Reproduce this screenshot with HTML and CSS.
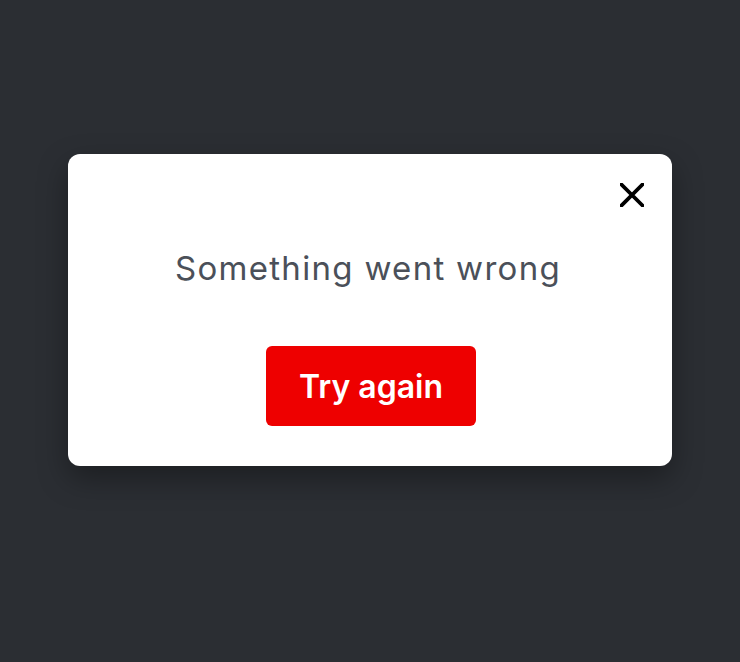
FILE: index.html
```html
<!DOCTYPE html>
<html lang="en">
<head>
<meta charset="utf-8">
<title>Error</title>
<link rel="stylesheet" href="styles.css">
</head>
<body>
<div class="overlay">
  <div class="modal" role="dialog">
    <div class="modal-head">
      <button class="close" aria-label="Close">
        <svg width="24" height="24" viewBox="0 0 24 24"><path d="M1.5 1.5L22.5 22.5M22.5 1.5L1.5 22.5" stroke="#000" stroke-width="3.8" stroke-linecap="square" fill="none"/></svg>
      </button>
    </div>
    <p class="message">Something went wrong</p>
    <button class="retry">Try again</button>
  </div>
</div>
</body>
</html>
```

FILE: styles.css
```css
html, body {
  margin: 0;
  height: 100%;
}
body {
  background: #2b2e33;
  font-family: Inter, "Noto Sans", sans-serif;
}
.overlay {
  display: flex;
  justify-content: center;
  padding-top: 154px;
}
.modal {
  width: 604px;
  box-sizing: border-box;
  background: #fff;
  border-radius: 12px;
  padding: 28px 28px 40px;
  display: flex;
  flex-direction: column;
  align-items: center;
  box-shadow: 0 12px 30px rgba(0, 0, 0, 0.35);
}
.modal-head {
  align-self: stretch;
  display: flex;
  justify-content: flex-end;
  height: 24px;
}
.close {
  border: 0;
  background: none;
  padding: 0;
  width: 24px;
  height: 24px;
  cursor: pointer;
  display: block;
  margin-top: 1px;
}
.close svg {
  display: block;
}
.message {
  margin: 42px 4px 0 0;
  font-size: 33px;
  line-height: 40px;
  letter-spacing: 1.3px;
  color: #4b5059;
  font-weight: 400;
}
.retry {
  margin-top: 58px;
  margin-left: 2px;
  width: 210px;
  height: 80px;
  border: 0;
  border-radius: 6px;
  background: #ee0000;
  color: #fff;
  font-family: Inter, "Noto Sans", sans-serif;
  font-size: 32px;
  font-weight: 600;
  cursor: pointer;
}
```
